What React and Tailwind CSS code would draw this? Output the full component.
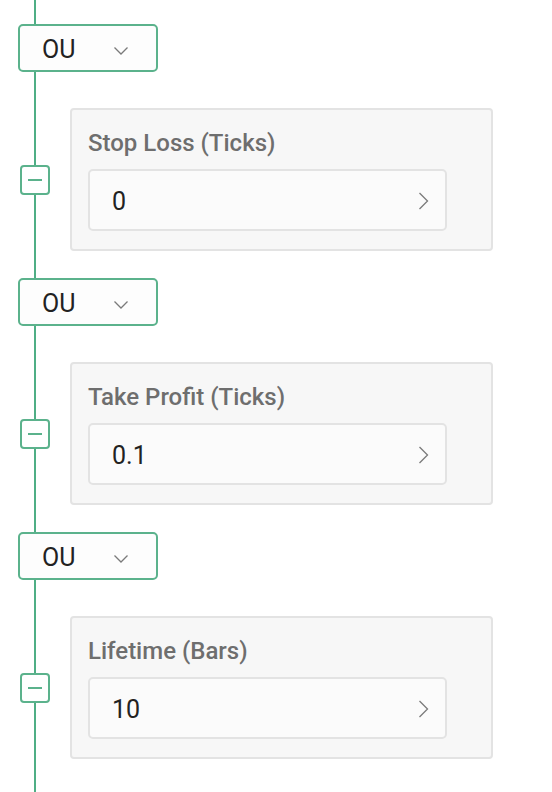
import React from "react";

const sections = [
  { label: "Stop Loss (Ticks)", value: "0" },
  { label: "Take Profit (Ticks)", value: "0.1" },
  { label: "Lifetime (Bars)", value: "10" },
];

function ChevronDown() {
  return (
    <svg width="16" height="10" viewBox="0 0 16 10" fill="none" className="block mt-[5px]">
      <path d="M1.5 1.5 L8 8 L14.5 1.5" stroke="#7a7a7a" strokeWidth="1.3" />
    </svg>
  );
}

function ChevronRight() {
  return (
    <svg width="11" height="18" viewBox="0 0 11 18" fill="none" className="block mt-[2px]">
      <path d="M1.5 1 L9.5 9 L1.5 17" stroke="#7a7a7a" strokeWidth="1.3" />
    </svg>
  );
}

function Section({ label, value }) {
  return (
    <div className="flex flex-col">
      <div className="ml-[18px] w-[140px] h-[48px] border-2 border-[#5bb28c] rounded-[5px] bg-[#fdfdfd] flex items-center pl-[22px] pr-[27px] justify-between">
        <span className="text-[25px] leading-none text-[#222] pt-[2px]">OU</span>
        <ChevronDown />
      </div>
      <div className="flex items-center mt-[36px]">
        <div className="ml-[20px] w-[30px] h-[30px] border-2 border-[#5bb28c] rounded-[4px] bg-white flex items-center justify-center">
          <div className="w-[14px] h-[2px] bg-[#5bb28c]" />
        </div>
        <div className="ml-[20px] w-[423px] h-[143px] border-2 border-[#e3e3e3] rounded-[4px] bg-[#f7f7f7] pt-[18px] pl-[16px]">
          <div className="text-[24px] leading-[30px] font-medium text-[#6e6e6e]">{label}</div>
          <div className="mt-[11px] w-[359px] h-[62px] border-2 border-[#e3e3e3] rounded-[5px] bg-[#fbfbfb] flex items-center justify-between pl-[22px] pr-[16px]">
            <span className="text-[25px] leading-none text-[#222] pt-[3px]">{value}</span>
            <ChevronRight />
          </div>
        </div>
      </div>
    </div>
  );
}

export default function App() {
  return (
    <div className="relative w-[552px] h-[792px] bg-white overflow-hidden" style={{ fontFamily: "Roboto, 'Noto Sans', sans-serif" }}>
      <div className="absolute left-[34px] top-0 bottom-0 w-[2px] bg-[#4fae85]" />
      <div className="relative flex flex-col pt-[24px] gap-[27px]">
        {sections.map((s) => (
          <Section key={s.label} {...s} />
        ))}
      </div>
    </div>
  );
}
